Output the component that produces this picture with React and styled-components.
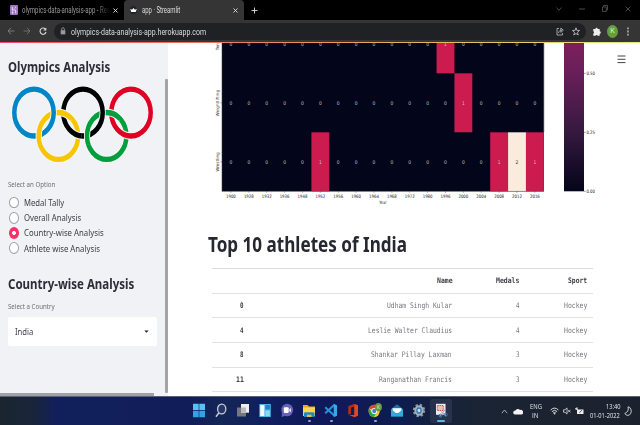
import React, { useLayoutEffect, useRef } from "react";
import styled, { createGlobalStyle } from "styled-components";

const Global = createGlobalStyle`
  * { box-sizing: border-box; }
  body { margin: 0; background: #fff; overflow: hidden; }
  svg { display: block; flex: none; }
`;

/* ---------- text condensed to a given width ---------- */
const FitBox = styled.span`
  display: block;
  flex: none;
  width: ${(p) => p.$w}px;
  white-space: nowrap;
`;
const FitText = styled.span`
  display: inline-block;
  transform-origin: 0 50%;
`;
function Fit({ w, children }) {
  const ref = useRef(null);
  useLayoutEffect(() => {
    ref.current.style.transform = `scaleX(${w / ref.current.offsetWidth})`;
  }, [w]);
  return (
    <FitBox $w={w}>
      <FitText ref={ref}>{children}</FitText>
    </FitBox>
  );
}

/* ---------- window ---------- */
const Window = styled.div`
  width: 640px;
  height: 425px;
  display: flex;
  flex-direction: column;
  overflow: hidden;
  font-family: "Noto Sans", sans-serif;
`;
const TabStrip = styled.div`
  height: 20px;
  flex: none;
  display: flex;
  background: #000;
`;
const Tab = styled.div`
  width: ${(p) => p.$w}px;
  height: 20px;
  display: flex;
  align-items: center;
  padding: 0 6px 0 ${(p) => p.$left}px;
  border-radius: 4px 4px 0 0;
  background: ${(p) => (p.$active ? "#353535" : "#000")};
  color: ${(p) => (p.$active ? "#dcdcdc" : "#999")};
  font: 8.2px/20px Roboto, sans-serif;
`;
const TabLabel = styled.div`
  flex: 1;
  padding-left: ${(p) => p.$gap}px;
`;
const FadingLabel = styled(TabLabel)`
  mask-image: linear-gradient(90deg, #000 83%, transparent 97%);
`;
const PlusSlot = styled.div`
  flex: 1;
  padding: 7px 0 0 7px;
`;
const WindowControls = styled.div`
  display: flex;
  align-items: center;
  gap: 17px;
  padding-right: 9px;
  height: 17px;
`;
const Toolbar = styled.div`
  height: 22px;
  flex: none;
  display: flex;
  align-items: center;
  background: #353535;
`;
const NavIcons = styled.div`
  width: 54px;
  padding-left: 7px;
  display: flex;
  gap: 8px;
`;
const AddressBar = styled.div`
  width: 532px;
  height: 17px;
  border-radius: 9px;
  background: #202124;
  color: #dcdcdc;
  display: flex;
  align-items: center;
  padding: 0 6px;
  font: 9.4px/17px Roboto, sans-serif;
`;
const Url = styled.div`
  flex: 1;
  padding-left: 5px;
`;
const AddressIcons = styled.div`
  display: flex;
  gap: 8px;
`;
const ToolbarEnd = styled.div`
  display: flex;
  align-items: center;
  gap: 6px;
  padding-left: 7px;
`;
const Avatar = styled.div`
  width: 11px;
  height: 13px;
  border-radius: 50%;
  background: #689f38;
  color: #e4efdb;
  text-align: center;
  font: 7px/13px Roboto, sans-serif;
`;
const GradientLine = styled.div`
  height: 1px;
  flex: none;
  background: linear-gradient(90deg, #f04a6c, #ef8a60 45%, #e0cf62 80%, #e6e77c);
`;

/* ---------- page ---------- */
const Page = styled.div`
  height: 353px;
  flex: none;
  display: flex;
  overflow: hidden;
`;
const Sidebar = styled.aside`
  width: 168px;
  flex: none;
  background: #f0f2f6;
  display: grid;
  grid-template-columns: 165px 3px;
  grid-template-rows: 350px 3px;
`;
const SidebarBody = styled.div`
  padding: 15px 8px 0;
  overflow: hidden;
`;
const ScrollTrack = styled.div`
  padding-top: 36px;
`;
const VThumb = styled.div`
  height: 314px;
  background: #a3a3a8;
  border-radius: 1px;
`;
const HThumb = styled.div`
  width: 154px;
  height: 3px;
  background: #a0a1a6;
`;
const SideHeading = styled.h1`
  margin: 0;
  height: 18px;
  font: 700 13.8px/18px "Noto Sans", sans-serif;
  color: #2c2d36;
`;
const RingsWrap = styled.div`
  height: 88px;
  padding: 10px 0 0 3px;
`;
const FieldLabel = styled.div`
  height: 14px;
  margin-top: ${(p) => p.$top}px;
  font: 7.7px/14px "Noto Sans", sans-serif;
  color: #6c6d75;
`;
const RadioGroup = styled.div`
  padding-top: 4px;
  display: flex;
  flex-direction: column;
`;
const RadioRow = styled.label`
  height: 15.2px;
  display: flex;
  align-items: center;
  gap: 5px;
  padding-left: 1px;
  font: 9.5px/15px "Noto Sans", sans-serif;
  color: #3b3c45;
`;
const RadioDot = styled.span`
  width: 10px;
  height: 11.6px;
  flex: none;
  border-radius: 50%;
  border: ${(p) => (p.$on ? "0 solid" : "1px solid #9fa1a7")};
  background: ${(p) => (p.$on ? "radial-gradient(circle, #fff 1.6px, #f63366 2.3px)" : "#fff")};
`;
const SecondHeading = styled(SideHeading)`
  margin-top: 19px;
`;
const Select = styled.div`
  width: 149px;
  height: 29px;
  margin-top: 3.5px;
  padding: 0 8px 0 7px;
  display: flex;
  align-items: center;
  justify-content: space-between;
  border-radius: 2px;
  background: #fff;
  font: 9.5px/29px "Noto Sans", sans-serif;
  color: #3b3c45;
`;
const Main = styled.main`
  flex: 1;
  background: #fff;
  display: flex;
  flex-direction: column;
`;
const ChartRow = styled.div`
  height: 165px;
  display: flex;
  padding-left: 42px;
`;
const MenuSlot = styled.div`
  padding: 12px 0 0 9px;
`;
const Title = styled.h1`
  margin: 22px 0 0 40px;
  height: 28px;
  font: 700 21.3px/28px "Noto Sans", sans-serif;
  color: #262730;
`;
const Table = styled.div`
  width: 381px;
  margin: 10px 0 0 44px;
  border-top: 1px solid #dcdcde;
  font: 7.6px/23px "DejaVu Sans Mono", monospace;
`;
const Row = styled.div`
  height: 24.65px;
  display: grid;
  grid-template-columns: 32px 208px 67.5px 67.5px;
  align-items: center;
  border-bottom: 1px solid #e2e2e5;
  color: #75767e;
`;
const Cell = styled.div`
  display: flex;
  justify-content: flex-end;
  ${(p) => p.$bold && "font-weight: 700; color: #3c3d46;"}
`;

/* ---------- taskbar ---------- */
const Taskbar = styled.footer`
  height: 29px;
  flex: none;
  display: flex;
  align-items: center;
  border-top: 1px solid #596173;
  background: linear-gradient(90deg, #1b2530 0, #18243a 35px, #11205c 55px, #111d58 190px,
    #142656 225px, #10205e 260px, #10195a 320px, #0e1c50 400px, #15213b 440px, #1a2434 475px, #1c222d 640px);
`;
const Apps = styled.div`
  display: flex;
  width: 306px;
  margin-left: 188px;
`;
const AppSlot = styled.div`
  width: 22px;
  height: 24px;
  display: flex;
  flex-direction: column;
  align-items: center;
  padding-top: 4px;
  gap: 2px;
  border-radius: 2px;
  background: ${(p) => (p.$active ? "rgba(255,255,255,.08)" : "none")};
`;
const RunMark = styled.i`
  width: ${(p) => (p.$active ? 8 : 3)}px;
  height: 1.5px;
  border-radius: 1px;
  background: ${(p) => (p.$active ? "#55b8e8" : "#9ca4b6")};
`;
const Tray = styled.div`
  display: flex;
  align-items: center;
  color: #e8e9ec;
  padding-left: 7px;
  font: 7.8px/9px "Open Sans", sans-serif;
`;
const Lang = styled.div`
  width: 13px;
  margin: 0 8px 0 6px;
  display: flex;
  flex-direction: column;
  align-items: center;
`;
const Clock = styled.div`
  width: 30px;
  margin: 0 4px 0 6px;
  display: flex;
  flex-direction: column;
  align-items: flex-end;
`;
const TrayIcons = styled.div`
  display: flex;
  gap: 4px;
`;

/* ---------- drawings ---------- */
const Cross = ({ s = 5, c = "#ddd", w = 1.1 }) => (
  <svg width={s} height={s} viewBox="0 0 6 6"><path d="M.6.6l4.8 4.8M5.4.6L.6 5.4" stroke={c} strokeWidth={w} /></svg>
);

function Rings() {
  const ring = (cx, cy, color, key) => (
    <g key={key} fill="none">
      <circle cx={cx} cy={cy} r="19.7" stroke="#f6f7f9" strokeWidth="6.2" />
      <circle cx={cx} cy={cy} r="19.7" stroke={color} strokeWidth="4.5" />
    </g>
  );
  return (
    <svg width="142" height="77" viewBox="0 0 142 64.7" preserveAspectRatio="none">
      <defs>
        <clipPath id="under">
          <path d="M22 32h12v17h-12zM47 15h14v14h-14zM70 32h12v17h-12zM95 15h14v14h-14z" />
        </clipPath>
      </defs>
      {ring(47.4, 42, "#f7c600")}
      {ring(95.7, 42, "#009f3d")}
      {ring(23, 22.3, "#0085c7")}
      {ring(72, 22.3, "#000")}
      {ring(120, 22.3, "#df0024")}
      <g clipPath="url(#under)">
        {ring(47.4, 42, "#f7c600")}
        {ring(95.7, 42, "#009f3d")}
      </g>
    </svg>
  );
}

const YEARS = [1900, 1928, 1932, 1936, 1948, 1952, 1956, 1960, 1964, 1968, 1972, 1980, 1996, 2000, 2004, 2008, 2012, 2016];
const ROWS = [
  { name: "Tennis", y: -28.7, cells: { 12: 1 } },
  { name: "Weightlifting", y: 30.3, cells: { 13: 1 } },
  { name: "Wrestling", y: 89.3, cells: { 5: 1, 15: 1, 16: 2, 17: 1 } },
];
const CELL_W = 17.88;
const LEFT = 12;

function Heatmap() {
  return (
    <svg width="398" height="165" viewBox="0 0 398 165" fontFamily="DejaVu Sans, sans-serif" fontSize="4.6">
      <defs>
        <linearGradient id="bar" x1="0" y1="0" x2="0" y2="1">
          <stop offset="0" stopColor="#7d1f5b" />
          <stop offset=".2" stopColor="#681f59" />
          <stop offset=".6" stopColor="#35193e" />
          <stop offset="1" stopColor="#03051a" />
        </linearGradient>
      </defs>
      <rect x={LEFT} y="0" width={CELL_W * 18} height="148.3" fill="#03051a" />
      {ROWS.map((row, r) => (
        <g key={row.name}>
          {YEARS.map((year, i) => {
            const v = row.cells[i] || 0;
            const x = LEFT + i * CELL_W;
            return (
              <g key={year}>
                {v > 0 && (
                  <rect x={x} y={row.y} width={CELL_W} height="59" fill={v === 2 ? "#faebdd" : "#cb1b4f"} />
                )}
                <text x={x + CELL_W / 2 - 1.4} y={r === 0 ? 2.7 : row.y + 31.3} textLength="2.8" lengthAdjust="spacingAndGlyphs" fontSize="5.2" fill={v === 2 ? "#333" : "#c4c5ca"}>
                  {v}
                </text>
              </g>
            );
          })}
        </g>
      ))}
      {YEARS.map((year, i) => {
        const x = LEFT + (i + 0.5) * CELL_W;
        return (
          <g key={year}>
            <path d={`M${x} 148.3v1.4`} stroke="#444" strokeWidth=".5" />
            <text x={x - 4.9} y="154.9" textLength="9.8" lengthAdjust="spacingAndGlyphs" fill="#222">{year}</text>
          </g>
        );
      })}
      <text x="169.2" y="161" textLength="7.4" lengthAdjust="spacingAndGlyphs" fill="#222">Year</text>
      <g fill="#222" fontSize="4.2">
        <text transform="translate(8.9 7.2) rotate(-90)">Tennis</text>
        <text transform="translate(8.9 73.4) rotate(-90)" textLength="26.5" lengthAdjust="spacingAndGlyphs">Weightlifting</text>
        <text transform="translate(8.9 128.8) rotate(-90)" textLength="19.5" lengthAdjust="spacingAndGlyphs">Wrestling</text>
      </g>
      <path d="M10.5 59.8H12M10.5 118.8H12" stroke="#444" strokeWidth=".5" />
      <path d="M11.9 0V148.4H334M333.9 0V89.3" fill="none" stroke="#555" strokeWidth=".5" />
      <rect x="354" y="0" width="20" height="148.3" fill="url(#bar)" />
      {["0.50", "0.25", "0.00"].map((t, i) => (
        <g key={t}>
          <path d={`M374 ${30.3 + 59 * i}h1.6`} stroke="#333" strokeWidth=".5" />
          <text x="376.4" y={32 + 59 * i} textLength="8.4" lengthAdjust="spacingAndGlyphs" fill="#222">{t}</text>
        </g>
      ))}
    </svg>
  );
}

const Icon = ({ children, w = 14, h = 15 }) => (
  <svg width={w} height={h} viewBox="0 0 14 15">{children}</svg>
);
const WindowsIcon = () => (
  <Icon><g fill="#54c2f2"><path d="M1 .7h5.7v6.4H1zM7.3.7H13v6.4H7.3z" /><path fill="#30a5e5" d="M1 7.8h5.7v6.5H1zM7.3 7.8H13v6.5H7.3z" /></g></Icon>
);
const SearchIcon = () => (
  <Icon><ellipse cx="7.7" cy="6" rx="4.1" ry="4.9" fill="#28356a" stroke="#c5cad8" strokeWidth="1.3" /><path d="M4.8 10L2 13.7" stroke="#c5cad8" strokeWidth="1.5" /></Icon>
);
const TaskViewIcon = () => (
  <Icon><path fill="#77777b" d="M1 4.5h9v9H1z" /><path fill="#eee" d="M5 1h8v8.7H5z" /><path fill="#b9b9bb" d="M5 4.5h5v5.2H5z" /></Icon>
);
const WidgetsIcon = () => (
  <Icon><rect x="1.3" y="1" width="11.5" height="13" fill="#46b4e6" /><path fill="#f4f8fb" d="M2.2 2h4.2v11H2.2z" /><path fill="#2680c6" d="M7.4 2h4.4v4.5H7.4z" /><path fill="#8ad8f4" d="M7.4 7.4h4.4V13H7.4z" /></Icon>
);
const ChatIcon = () => (
  <Icon><ellipse cx="7.2" cy="7" rx="5.9" ry="6.3" fill="#6960b7" /><path d="M2 9l-.3 5 4-1.5z" fill="#6960b7" /><rect x="3.8" y="4.3" width="4.9" height="5.6" rx="1" fill="#fff" /><path fill="#dedcf5" d="M9.1 6.4L11 5v4.5L9.1 8z" /></Icon>
);
const ExplorerIcon = () => (
  <Icon><path fill="#e9a91c" d="M1 2h4.5L7 3.5h6V7H1z" /><path fill="#ffd455" d="M1 4.5h12V13H1z" /><path fill="#2087c7" d="M3 9.2h8.5a1 1 0 011 1V14H2v-3.8a1 1 0 011-1z" /><path fill="#e9bd3e" d="M5 11.7h4.5V14H5z" /></Icon>
);
const CodeIcon = () => (
  <Icon><path d="M1.2 4.3l9 8.2M1.2 10.3l9-8.2" stroke="#2495d8" strokeWidth="2" fill="none" /><path fill="#35a7ec" d="M9.7.7L13 2.3v10.4l-3.3 1.6z" /></Icon>
);
const OfficeIcon = () => (
  <Icon><path fill="#e2471d" d="M8.5.9L12 2.2v10.6l-3.5 1.4-5.3-2.1 5-.1V3.6L5 4.6v5.8l-2.4 1.2V3.3z" /><path fill="#b7291a" d="M2.6 3.3L8.5.9v2.6L5 4.6v5.8l-2.4 1.2z" /></Icon>
);
const ChromeIcon = () => (
  <Icon w={16}>
    <ellipse cx="6.2" cy="8" rx="5.6" ry="6.2" fill="#f2c52e" />
    <path fill="#dc4436" d="M6.2 8L1.2 5.2a5.6 6.2 0 0110 0H6.2z" />
    <path fill="#2ba24c" d="M1.2 5.2a5.6 6.2 0 004.5 9L8.3 9.8 4.1 9.7z" />
    <ellipse cx="6.2" cy="8" rx="2.8" ry="3.1" fill="#fff" /><ellipse cx="6.2" cy="8" rx="2" ry="2.3" fill="#3b7fe0" />
    <ellipse cx="10.4" cy="4.2" rx="3.5" ry="4.1" fill="#699b40" />
    <text x="10.4" y="6" fontSize="4.6" textAnchor="middle" fill="#dce8cd" fontFamily="Roboto, sans-serif">K</text>
  </Icon>
);
const MailIcon = () => (
  <Icon><path fill="#1673b6" d="M1 6l6-4.8L13 6v7.6H1z" /><path fill="#fff" d="M2.5 5.2h9v5h-9z" /><path fill="#31a9df" d="M1 6l6 5 6-5v7.6H1z" /></Icon>
);
const GearIcon = () => (
  <Icon>
    <ellipse cx="7" cy="7.5" rx="5.2" ry="5.7" fill="none" stroke="#8c96a3" strokeWidth="2" strokeDasharray="2.3 2" />
    <ellipse cx="7" cy="7.5" rx="3.7" ry="4.3" fill="#3376b8" stroke="#a7afb9" strokeWidth="1.9" /><ellipse cx="7" cy="7.5" rx="1.4" ry="1.7" fill="#d5e0ea" />
  </Icon>
);
const SnipIcon = () => (
  <Icon><path fill="#f0eded" d="M2 .8h9.5v11H2z" /><path d="M3.3 2.5h6v5h-6z" fill="#d8c7c4" stroke="#c94b3b" strokeWidth="1" strokeDasharray="1.4 .8" /><path d="M6 13.5L11.5 6M12 13L7 8.5" stroke="#9ba8b6" strokeWidth="1" /><circle cx="6.5" cy="12.7" r="1.5" fill="none" stroke="#2c7fc1" /><circle cx="11.7" cy="11.7" r="1.5" fill="none" stroke="#2c7fc1" /></Icon>
);

const APPS = [
  [WindowsIcon], [SearchIcon], [TaskViewIcon], [WidgetsIcon], [ChatIcon], [ExplorerIcon, true],
  [CodeIcon, true], [OfficeIcon], [ChromeIcon, true], [MailIcon], [GearIcon], [SnipIcon, true, true],
];

const OPTIONS = [
  ["Medal Tally", 40.5], ["Overall Analysis", 57], ["Country-wise Analysis", 79.5], ["Athlete wise Analysis", 76],
];
const ATHLETES = [
  ["0", "Udham Singh Kular", "4", "Hockey"],
  ["4", "Leslie Walter Claudius", "4", "Hockey"],
  ["8", "Shankar Pillay Laxman", "3", "Hockey"],
  ["11", "Ranganathan Francis", "3", "Hockey"],
];
const mono = (text) => (text ? <Fit w={text.length * 3.84}>{text}</Fit> : null);

export default function App() {
  return (
    <Window>
      <Global />
      <TabStrip>
        <Tab $w={124} $left={10}>
          <svg width="8" height="10" viewBox="0 0 8 10"><rect width="8" height="10" rx="1" fill="#9d75c2" /><path d="M2.3 1.8v3.5c1.5-.8 3.4-1 3.4.6v2.4M2.3 6.8v1.6l1-.8zM5.6 1.8q0 1-.8 1.6" fill="none" stroke="#f2eaf8" strokeWidth=".9" /></svg>
          <FadingLabel $gap={4}><Fit w={88}>olympics-data-analysis-app - Res</Fit></FadingLabel>
          <Cross />
        </Tab>
        <Tab $w={120} $left={6} $active>
          <svg width="7" height="8" viewBox="0 0 7 8"><ellipse cx="3.5" cy="4" rx="3.5" ry="4" fill="#20232c" /><path fill="#fff" d="M.2 2.8l1.8 1 1.5-1.9L5 3.8l1.8-1-1 3.3H1.2z" /></svg>
          <TabLabel $gap={4.5}><Fit w={38.5}>app · Streamlit</Fit></TabLabel>
          <Cross />
        </Tab>
        <PlusSlot><svg width="7" height="7" viewBox="0 0 7 7"><path d="M3.5.5v6M.5 3.5h6" stroke="#ccc" /></svg></PlusSlot>
        <WindowControls>
          <svg width="6" height="4" viewBox="0 0 6 4"><path d="M.5.5L3 3.3 5.5.5" fill="none" stroke="#555" strokeWidth=".8" /></svg>
          <svg width="6" height="2"><path d="M0 1h6" stroke="#555" strokeWidth=".9" /></svg>
          <svg width="6" height="7" viewBox="0 0 6 7"><path d="M.5 2h3.8v4.5H.5zM1.7 1.8V.5h3.8v4.5H4.5" fill="none" stroke="#555" strokeWidth=".8" /></svg>
          <Cross s={6} c="#5c5c5c" w={0.8} />
        </WindowControls>
      </TabStrip>
      <Toolbar>
        <NavIcons>
          <svg width="8" height="8" viewBox="0 0 8 8"><path d="M7.5 4H1M4 .8L1 4l3 3.2" fill="none" stroke="#808080" strokeWidth=".9" /></svg>
          <svg width="8" height="8" viewBox="0 0 8 8"><path d="M.5 4H7M4 .8L7 4 4 7.2" fill="none" stroke="#757575" strokeWidth=".9" /></svg>
          <svg width="8" height="8" viewBox="0 0 8 8"><path d="M6.3 2A3 3.2 0 107 5" fill="none" stroke="#dadada" strokeWidth="1.1" /><path fill="#dadada" d="M7.3.4v3.2H4.3z" /></svg>
        </NavIcons>
        <AddressBar>
          <svg width="6" height="8" viewBox="0 0 6 8"><path fill="#999" d="M.7 3.2h4.6v4.2H.7z" /><path d="M1.7 3.5V2a1.3 1.3 0 012.6 0v1.5" fill="none" stroke="#999" strokeWidth=".8" /></svg>
          <Url><Fit w={135}>olympics-data-analysis-app.herokuapp.com</Fit></Url>
          <AddressIcons>
            <svg width="8" height="9" viewBox="0 0 8 9"><path d="M3 1.5H1v6.5h5.5V6M2.5 6C2.7 4 4 3.2 6 3.2M4.8 1L7.3 3.2 4.8 5.4z" fill="none" stroke="#aaa" strokeWidth=".9" /></svg>
            <svg width="8" height="9" viewBox="0 0 8 9"><path d="M4 .8l.9 2.6 2.6.1-2 1.8.7 2.7L4 6.5 1.8 8l.7-2.7-2-1.8 2.6-.1z" fill="none" stroke="#bbb" strokeWidth=".9" /></svg>
          </AddressIcons>
        </AddressBar>
        <ToolbarEnd>
          <svg width="8" height="9" viewBox="0 0 8 9"><path fill="#eee" d="M.3 2h2.200a1.100 1.200 0 112.200 0h2v2.300a1.100 1.200 0 110 2.400v2H4.700a1.200 1.200 0 00-2.200 0H.3V6.500a1.200 1.200 0 000-2.200z" /></svg>
          <Avatar>K</Avatar>
          <svg width="8" height="9" viewBox="0 0 8 9"><path fill="#bbb" d="M3.2.5h1.5v1.8H3.2zM3.2 3.6h1.5v1.8H3.2zM3.2 6.7h1.5v1.8H3.2z" /></svg>
        </ToolbarEnd>
      </Toolbar>
      <GradientLine />
      <Page>
        <Sidebar>
          <SidebarBody>
            <SideHeading><Fit w={102.5}>Olympics Analysis</Fit></SideHeading>
            <RingsWrap><Rings /></RingsWrap>
            <FieldLabel $top={13}><Fit w={47}>Select an Option</Fit></FieldLabel>
            <RadioGroup>
              {OPTIONS.map(([label, w], i) => (
                <RadioRow key={label}><RadioDot $on={i === 2} /><Fit w={w}>{label}</Fit></RadioRow>
              ))}
            </RadioGroup>
            <SecondHeading><Fit w={126}>Country-wise Analysis</Fit></SecondHeading>
            <FieldLabel $top={6.5}><Fit w={47}>Select a Country</Fit></FieldLabel>
            <Select>
              <Fit w={18.5}>India</Fit>
              <svg width="5" height="3" viewBox="0 0 5 3"><path fill="#222" d="M.3.4h4.4L2.5 2.8z" /></svg>
            </Select>
          </SidebarBody>
          <ScrollTrack><VThumb /></ScrollTrack>
          <HThumb />
        </Sidebar>
        <Main>
          <ChartRow>
            <Heatmap />
            <MenuSlot><svg width="10" height="9" viewBox="0 0 10 9"><path d="M.5 1h8M.5 4.3h8M.5 7.6h8" stroke="#44454d" strokeWidth="1" /></svg></MenuSlot>
          </ChartRow>
          <Title><Fit w={199}>Top 10 athletes of India</Fit></Title>
          <Table>
            <Row>
              <Cell />
              {["Name", "Medals", "Sport"].map((t) => <Cell key={t} $bold>{mono(t)}</Cell>)}
            </Row>
            {ATHLETES.map((a) => (
              <Row key={a[0]}>{a.map((t, i) => <Cell key={i} $bold={i === 0}>{mono(t)}</Cell>)}</Row>
            ))}
          </Table>
        </Main>
      </Page>
      <Taskbar>
        <Apps>
          {APPS.map(([Glyph, running, active], i) => (
            <AppSlot key={i} $active={active}><Glyph />{running && <RunMark $active={active} />}</AppSlot>
          ))}
        </Apps>
        <Tray>
          <svg width="7" height="5" viewBox="0 0 7 5"><path d="M.8 4.2L3.5 1l2.7 3.2" fill="none" stroke="#ccc" strokeWidth=".8" /></svg>
          <svg width="15" height="7" viewBox="0 0 15 7"><path fill="#f2f2f2" d="M7 6.500a2 2 0 01.5-4 2.600 2.600 0 014.500-.5A2.300 2.300 0 0113.500 6.500z" /></svg>
          <Lang><Fit w={12}>ENG</Fit><Fit w={6.5}>IN</Fit></Lang>
          <TrayIcons>
            <svg width="9" height="8" viewBox="0 0 9 8"><path d="M.6 3Q4.5-.8 8.4 3M1.9 4.6Q4.5 2 7.1 4.6M3.2 6Q4.5 4.9 5.8 6" fill="none" stroke="#ddd" strokeWidth="1" /><circle cx="4.5" cy="6.8" r=".8" fill="#ddd" /></svg>
            <svg width="8" height="8" viewBox="0 0 8 8"><path d="M.5 2.8h1.5L4 .9v6.2L2 5.2H.5zM5 2.8l2.5 2.6M7.5 2.8L5 5.4" fill="none" stroke="#ddd" strokeWidth=".8" /></svg>
            <svg width="9" height="8" viewBox="0 0 9 8"><path fill="#eee" d="M2 2.5h6.5V7H2z" /><path d="M.5 1l3 3M2 .3v2M.3 2h2" stroke="#eee" strokeWidth="1" /><path d="M4.5 5.7L6.8 3.2" stroke="#1c222d" strokeWidth=".8" /></svg>
          </TrayIcons>
          <Clock><Fit w={14.5}>13:40</Fit><Fit w={30}>01-01-2022</Fit></Clock>
          <svg width="8" height="10" viewBox="0 0 8 10"><path d="M4 .8A3.5 4.3 0 11.8 7.4 5.5 5.5 0 004 .8z" fill="none" stroke="#ddd" strokeWidth=".9" /></svg>
        </Tray>
      </Taskbar>
    </Window>
  );
}
